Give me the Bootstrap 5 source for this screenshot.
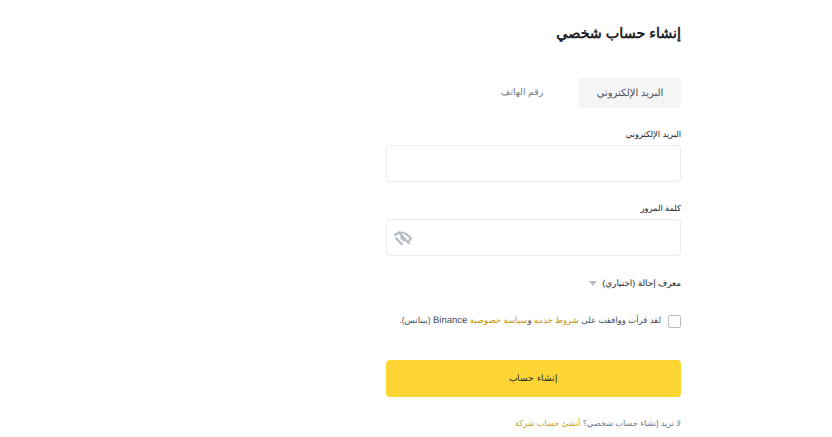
<!DOCTYPE html>
<html lang="ar" dir="rtl">
<head>
<meta charset="utf-8">
<title>إنشاء حساب شخصي</title>
<link href="https://cdn.jsdelivr.net/npm/bootstrap@5.3.0/dist/css/bootstrap.min.css" rel="stylesheet">
<style>
html,body{height:437px;overflow:hidden;background:#fff}
body{font-family:"Liberation Sans",Arial,sans-serif;color:#1e2329;font-size:9px;text-rendering:geometricPrecision}
.signup-wrap{width:295px;margin-right:151px;padding-top:24px}
.signup-title{font-size:14.3px;font-weight:700;line-height:20px;height:20px;margin:0 0 34px;color:#1e2329}
.tabs-row{height:30px;margin-bottom:20px}
.tab-item{width:102px;height:30px;display:flex;align-items:center;justify-content:center;font-size:10px;color:#707a8a;border-radius:2px}
.tab-active{background:#f5f5f5;color:#474d57}
.tab-plain{width:114px;font-size:9.3px}
.fld-label{font-size:8.3px;line-height:12px;height:12px;margin-bottom:5px;color:#1e2329}
.fld-box{height:37px;border:1px solid #eaecef;border-radius:4px;background:#fff;display:flex;align-items:center;justify-content:flex-end;padding:0 6px}
.fld-gap{margin-bottom:20px}
.ref-row{height:14px;line-height:14px;margin-top:20px;margin-bottom:24px;font-size:8.8px;gap:5px;color:#1e2329}
.ref-caret{width:0;height:0;border-left:4.5px solid transparent;border-right:4.5px solid transparent;border-top:5px solid #b7bdc6;margin-top:1px}
.agree-row{gap:7px;height:14px;margin-bottom:32px;font-size:8.5px;color:#474d57;white-space:nowrap}
.agree-box{width:13px;height:13px;border:1px solid #b7bdc6;border-radius:2px;flex:none}
.gold{color:#c99400;text-decoration:none}
.agree-latin{font-size:9.5px}
.submit-btn{display:block;width:100%;height:37px;background:#fcd535;border:0;border-radius:4px;color:#1e2329;font-size:8.9px;padding:0}
.submit-btn:hover{background:#fcd535;color:#1e2329}
.foot-note{margin-top:20px;line-height:14px;font-size:8.2px;color:#707a8a}
.foot-note .gold{color:#c9a227}
</style>
</head>
<body>
<main class="signup-wrap">
  <h1 class="signup-title">إنشاء حساب شخصي</h1>
  <div class="tabs-row d-flex">
    <div class="tab-item tab-active">البريد الإلكتروني</div>
    <div class="tab-item tab-plain">رقم الهاتف</div>
  </div>
  <div class="fld-gap">
    <div class="fld-label">البريد الإلكتروني</div>
    <div class="fld-box"></div>
  </div>
  <div>
    <div class="fld-label">كلمة المرور</div>
    <div class="fld-box">
      <svg width="20" height="18" viewBox="0 0 20 18" fill="none" stroke="#b7bdc6" stroke-width="2.200" aria-hidden="true">
        <path d="M1.500 6.500C3.500 4.500 6 3.500 8.500 3.500c3.500 0 6.500 2.500 9.500 6-1 1.500-2 2.600-3.200 3.500"/>
        <path d="M5 2.500 16.500 15"/>
        <path d="M2.500 8.500 9.500 16"/>
        <path d="M7.500 7.500 11.500 12"/>
      </svg>
    </div>
  </div>
  <div class="ref-row d-flex align-items-center">
    <span>معرف إحالة (اختياري)</span>
    <span class="ref-caret"></span>
  </div>
  <div class="agree-row d-flex align-items-center">
    <span class="agree-box"></span>
    <span>لقد قرأت ووافقت على <a class="gold" href="#">شروط خدمة</a> و<a class="gold" href="#">سياسة خصوصية</a> <span class="agree-latin">Binance</span> (بينانس).</span>
  </div>
  <button type="button" class="btn submit-btn">إنشاء حساب</button>
  <p class="foot-note">لا تريد إنشاء حساب شخصي؟ <a class="gold" href="#">أنشئ حساب شركة</a></p>
</main>
<script src="https://cdn.jsdelivr.net/npm/bootstrap@5.3.0/dist/js/bootstrap.bundle.min.js"></script>
</body>
</html>
